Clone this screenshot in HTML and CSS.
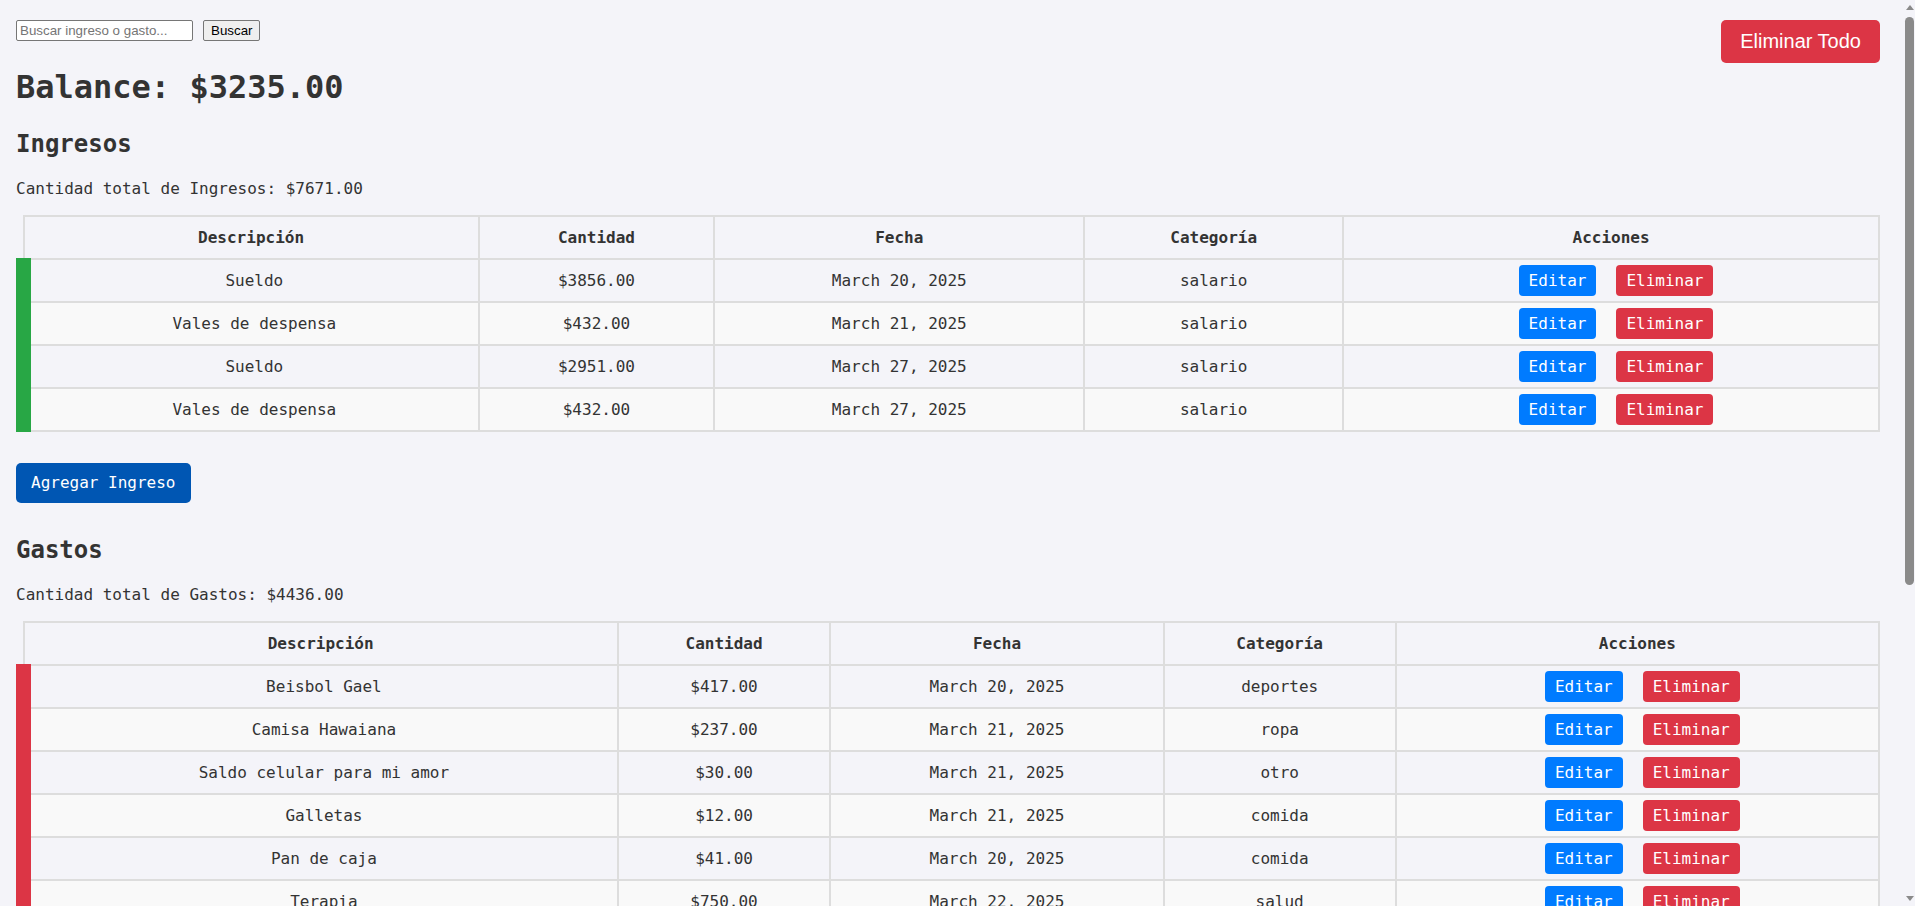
FILE: index.html
```html
<!DOCTYPE html>
<html lang="es">
<head>
<meta charset="utf-8">
<title>Control de Finanzas</title>
<link rel="stylesheet" href="styles.css">
</head>
<body>
<div class="app">
  <button type="button" class="btn-clear-all">Eliminar Todo</button>
  <form class="search">
    <input type="text" class="search-input" placeholder="Buscar ingreso o gasto...">
    <button type="button" class="search-btn">Buscar</button>
  </form>

  <h1 class="balance">Balance: $3235.00</h1>

  <section class="block block-income">
    <h2 class="block-title">Ingresos</h2>
    <p class="total">Cantidad total de Ingresos: $7671.00</p>
    <table class="records records-income">
      <colgroup>
        <col class="c-desc"><col class="c-amount"><col class="c-date"><col class="c-cat"><col class="c-act">
      </colgroup>
      <thead>
        <tr><th>Descripción</th><th>Cantidad</th><th>Fecha</th><th>Categoría</th><th>Acciones</th></tr>
      </thead>
      <tbody>
        <tr><td>Sueldo</td><td>$3856.00</td><td>March 20, 2025</td><td>salario</td><td><div class="actions"><button class="btn btn-edit">Editar</button><button class="btn btn-delete">Eliminar</button></div></td></tr>
        <tr><td>Vales de despensa</td><td>$432.00</td><td>March 21, 2025</td><td>salario</td><td><div class="actions"><button class="btn btn-edit">Editar</button><button class="btn btn-delete">Eliminar</button></div></td></tr>
        <tr><td>Sueldo</td><td>$2951.00</td><td>March 27, 2025</td><td>salario</td><td><div class="actions"><button class="btn btn-edit">Editar</button><button class="btn btn-delete">Eliminar</button></div></td></tr>
        <tr><td>Vales de despensa</td><td>$432.00</td><td>March 27, 2025</td><td>salario</td><td><div class="actions"><button class="btn btn-edit">Editar</button><button class="btn btn-delete">Eliminar</button></div></td></tr>
      </tbody>
    </table>
    <div class="add-row"><button type="button" class="btn-add">Agregar Ingreso</button></div>
  </section>

  <section class="block block-expense">
    <h2 class="block-title">Gastos</h2>
    <p class="total">Cantidad total de Gastos: $4436.00</p>
    <table class="records records-expense">
      <colgroup>
        <col class="c-desc"><col class="c-amount"><col class="c-date"><col class="c-cat"><col class="c-act">
      </colgroup>
      <thead>
        <tr><th>Descripción</th><th>Cantidad</th><th>Fecha</th><th>Categoría</th><th>Acciones</th></tr>
      </thead>
      <tbody>
        <tr><td>Beisbol Gael</td><td>$417.00</td><td>March 20, 2025</td><td>deportes</td><td><div class="actions"><button class="btn btn-edit">Editar</button><button class="btn btn-delete">Eliminar</button></div></td></tr>
        <tr><td>Camisa Hawaiana</td><td>$237.00</td><td>March 21, 2025</td><td>ropa</td><td><div class="actions"><button class="btn btn-edit">Editar</button><button class="btn btn-delete">Eliminar</button></div></td></tr>
        <tr><td>Saldo celular para mi amor</td><td>$30.00</td><td>March 21, 2025</td><td>otro</td><td><div class="actions"><button class="btn btn-edit">Editar</button><button class="btn btn-delete">Eliminar</button></div></td></tr>
        <tr><td>Galletas</td><td>$12.00</td><td>March 21, 2025</td><td>comida</td><td><div class="actions"><button class="btn btn-edit">Editar</button><button class="btn btn-delete">Eliminar</button></div></td></tr>
        <tr><td>Pan de caja</td><td>$41.00</td><td>March 20, 2025</td><td>comida</td><td><div class="actions"><button class="btn btn-edit">Editar</button><button class="btn btn-delete">Eliminar</button></div></td></tr>
        <tr><td>Terapia</td><td>$750.00</td><td>March 22, 2025</td><td>salud</td><td><div class="actions"><button class="btn btn-edit">Editar</button><button class="btn btn-delete">Eliminar</button></div></td></tr>
        <tr><td>Gasolina</td><td>$500.00</td><td>March 22, 2025</td><td>transporte</td><td><div class="actions"><button class="btn btn-edit">Editar</button><button class="btn btn-delete">Eliminar</button></div></td></tr>
        <tr><td>Despensa</td><td>$850.00</td><td>March 23, 2025</td><td>comida</td><td><div class="actions"><button class="btn btn-edit">Editar</button><button class="btn btn-delete">Eliminar</button></div></td></tr>
        <tr><td>Internet</td><td>$399.00</td><td>March 24, 2025</td><td>servicios</td><td><div class="actions"><button class="btn btn-edit">Editar</button><button class="btn btn-delete">Eliminar</button></div></td></tr>
        <tr><td>Luz</td><td>$220.00</td><td>March 24, 2025</td><td>servicios</td><td><div class="actions"><button class="btn btn-edit">Editar</button><button class="btn btn-delete">Eliminar</button></div></td></tr>
        <tr><td>Agua</td><td>$150.00</td><td>March 25, 2025</td><td>servicios</td><td><div class="actions"><button class="btn btn-edit">Editar</button><button class="btn btn-delete">Eliminar</button></div></td></tr>
        <tr><td>Uber</td><td>$95.00</td><td>March 25, 2025</td><td>transporte</td><td><div class="actions"><button class="btn btn-edit">Editar</button><button class="btn btn-delete">Eliminar</button></div></td></tr>
        <tr><td>Cine</td><td>$180.00</td><td>March 26, 2025</td><td>otro</td><td><div class="actions"><button class="btn btn-edit">Editar</button><button class="btn btn-delete">Eliminar</button></div></td></tr>
        <tr><td>Farmacia</td><td>$215.00</td><td>March 26, 2025</td><td>salud</td><td><div class="actions"><button class="btn btn-edit">Editar</button><button class="btn btn-delete">Eliminar</button></div></td></tr>
        <tr><td>Tacos</td><td>$120.00</td><td>March 27, 2025</td><td>comida</td><td><div class="actions"><button class="btn btn-edit">Editar</button><button class="btn btn-delete">Eliminar</button></div></td></tr>
        <tr><td>Papelería</td><td>$220.00</td><td>March 27, 2025</td><td>otro</td><td><div class="actions"><button class="btn btn-edit">Editar</button><button class="btn btn-delete">Eliminar</button></div></td></tr>
      </tbody>
    </table>
    <div class="add-row"><button type="button" class="btn-add">Agregar Gasto</button></div>
  </section>
</div>

<div class="scrollbar" aria-hidden="true">
  <span class="scrollbar-arrow scrollbar-arrow-up"></span>
  <span class="scrollbar-thumb"></span>
  <span class="scrollbar-arrow scrollbar-arrow-down"></span>
</div>
</body>
</html>
```

FILE: styles.css
```css
html {
  background: #f4f4f9;
}

body {
  margin: 0;
  background: #f4f4f9;
  color: #333;
  font-family: "DejaVu Sans Mono", "Liberation Mono", monospace;
  font-size: 16px;
}

.app {
  padding: 20px 35px 24px 16px;
}

/* imitation of the window scrollbar visible in the screenshot */
.scrollbar {
  position: fixed;
  top: 0;
  right: 0;
  width: 15px;
  height: 100vh;
  background: #f4f4f9;
  display: flex;
  flex-direction: column;
  align-items: center;
  padding-left: 4px;
  box-sizing: border-box;
}

.scrollbar-arrow {
  width: 0;
  height: 0;
  border-left: 4px solid transparent;
  border-right: 4px solid transparent;
}

.scrollbar-arrow-up {
  margin-top: 5px;
  border-bottom: 5px solid #8a8a8a;
}

.scrollbar-arrow-down {
  margin-top: auto;
  margin-bottom: 5px;
  border-top: 5px solid #8a8a8a;
}

.scrollbar-thumb {
  margin-top: 7px;
  width: 9px;
  height: 568px;
  border-radius: 5px;
  background: #8a8a8a;
}

/* top bar */
.btn-clear-all {
  float: right;
  font-family: "Liberation Sans", Arial, sans-serif;
  font-size: 20px;
  line-height: 23px;
  color: #fff;
  background: #dc3545;
  border: none;
  border-radius: 5px;
  padding: 10px 19px;
  cursor: pointer;
}

.search {
  display: flex;
  gap: 10px;
  margin: 0;
}

.search-input {
  box-sizing: border-box;
  width: 177px;
  height: 21px;
  padding: 1px 3px;
  border: 1px solid #767676;
  border-radius: 2px;
  background: #fff;
  font-family: "Liberation Sans", Arial, sans-serif;
  font-size: 13.333px;
  color: #000;
}

.search-input::placeholder {
  color: #757575;
}

.search-btn {
  box-sizing: border-box;
  height: 21px;
  padding: 1px 7px;
  border: 1px solid #767676;
  border-radius: 2px;
  background: #efefef;
  font-family: "Liberation Sans", Arial, sans-serif;
  font-size: 13.333px;
  color: #000;
}

.balance {
  margin: 26px 0 0;
  font-size: 32px;
  line-height: 40px;
  font-weight: bold;
}

.block-title {
  margin: 0;
  font-size: 24px;
  line-height: 30px;
  font-weight: bold;
}

.block-income .block-title {
  margin-top: 22px;
}

.block-expense .block-title {
  margin-top: 32px;
}

.total {
  margin: 19px 0 0;
  line-height: 21px;
}

/* tables */
.records {
  width: 100%;
  margin-top: 16px;
  border-collapse: collapse;
  table-layout: fixed;
}

.records th,
.records td {
  border: 2px solid #ddd;
  text-align: center;
  line-height: 21px;
  padding: 10px;
}

.records th {
  font-weight: bold;
}

.records td {
  padding: 5px 10px;
}

.records tbody tr:nth-child(even) {
  background: #f9f9f9;
}

.records-income tbody tr {
  border-left: 15px solid #28a745;
}

.records-expense tbody tr {
  border-left: 15px solid #dc3545;
}

.records-income .c-desc { width: 24.53%; }
.records-income .c-amount { width: 12.70%; }
.records-income .c-date { width: 19.94%; }
.records-income .c-cat { width: 13.95%; }
.records-income .c-act { width: 28.88%; }

.records-expense .c-desc { width: 32.03%; }
.records-expense .c-amount { width: 11.45%; }
.records-expense .c-date { width: 17.97%; }
.records-expense .c-cat { width: 12.50%; }
.records-expense .c-act { width: 26.05%; }

.actions {
  display: flex;
  justify-content: center;
  gap: 20px;
  padding-left: 10px;
}

.btn {
  font-family: "DejaVu Sans Mono", "Liberation Mono", monospace;
  font-size: 16px;
  line-height: 21px;
  color: #fff;
  border: none;
  border-radius: 4px;
  padding: 5px 10px;
  cursor: pointer;
}

.btn-edit {
  background: #007bff;
}

.btn-delete {
  background: #dc3545;
}

.add-row {
  margin-top: 31px;
}

.btn-add {
  font-family: "DejaVu Sans Mono", "Liberation Mono", monospace;
  font-size: 16px;
  line-height: 20px;
  color: #fff;
  background: #0056b3;
  border: none;
  border-radius: 5px;
  padding: 10px 15px;
  cursor: pointer;
}
```
